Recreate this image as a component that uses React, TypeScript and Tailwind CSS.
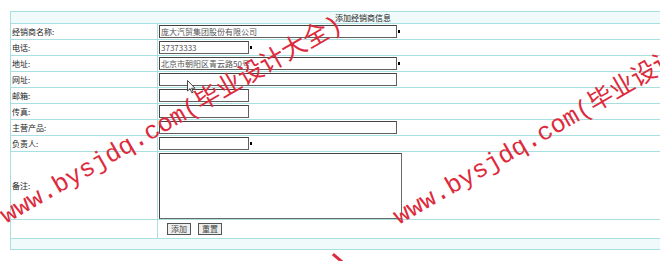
import { FC } from "react";

type Field = { label: string; value: string; width: string; required: boolean };

const fields: Field[] = [
  { label: "经销商名称:", value: "庞大汽贸集团股份有限公司", width: "w-[238px]", required: true },
  { label: "电话:", value: "37373333", width: "w-[90px]", required: true },
  { label: "地址:", value: "北京市朝阳区青云路50号", width: "w-[238px]", required: true },
  { label: "网址:", value: "", width: "w-[238px]", required: false },
  { label: "邮箱:", value: "", width: "w-[90px]", required: false },
  { label: "传真:", value: "", width: "w-[90px]", required: false },
  { label: "主营产品:", value: "", width: "w-[238px]", required: false },
  { label: "负责人:", value: "", width: "w-[90px]", required: true },
];

const font = "font-['Noto_Sans_CJK_SC','Noto_Sans',sans-serif]";

const Watermark: FC<{ className: string }> = ({ className }) => (
  <div
    className={`absolute whitespace-nowrap text-[25px] leading-[25px] text-[#dd2a3c] origin-[0_100%] rotate-[-30deg] font-['Liberation_Mono','Noto_Sans_CJK_SC',monospace] pointer-events-none ${className}`}
  >
    www.bysjdq.com(毕业设计大全)
  </div>
);

export default function App() {
  return (
    <div className={`relative w-[660px] h-[261px] overflow-hidden bg-white ${font} text-[8px] text-[#222]`}>
      <div className="ml-[10px] mt-[11px] w-[706px] border border-[#a8dfe0]">
        <div className="h-[11px] bg-[#f0fafa] flex items-center justify-center leading-none">
          添加经销商信息
        </div>

        {fields.map((f) => (
          <div key={f.label} className="flex h-[16px] border-t border-[#a8dfe0]">
            <div className="w-[147px] border-r border-[#a8dfe0] pl-[1px] flex items-center leading-none">
              {f.label}
            </div>
            <div className="flex-1 flex items-center pl-[1px]">
              <input
                readOnly
                defaultValue={f.value}
                className={`${f.width} h-[13px] border border-[#5f5f5f] border-t-[#444] border-l-[#444] bg-white px-[1px] text-[8px] text-[#555] leading-none outline-none ${font}`}
              />
              {f.required && <span className="ml-[1px] w-[2px] h-[3px] bg-black" />}
            </div>
          </div>
        ))}

        <div className="flex h-[68px] border-t border-[#a8dfe0]">
          <div className="w-[147px] border-r border-[#a8dfe0] pl-[1px] flex items-center leading-none">
            备注:
          </div>
          <div className="flex-1 pl-[1px] pt-[1px]">
            <textarea
              readOnly
              className="block w-[243px] h-[66px] border border-[#6a6a6a] border-t-[#444] border-l-[#444] bg-white resize-none outline-none"
            />
          </div>
        </div>

        <div className="flex h-[19px] border-t border-[#a8dfe0]">
          <div className="w-[147px] border-r border-[#a8dfe0]" />
          <div className="flex-1 flex items-center gap-[7px] pl-[9px]">
            <button className="w-[24px] h-[12px] border border-[#555] bg-[#eeeeee] text-[8px] text-[#444] leading-none flex items-center justify-center">
              添加
            </button>
            <button className="w-[24px] h-[12px] border border-[#555] bg-[#eeeeee] text-[8px] text-[#444] leading-none flex items-center justify-center">
              重置
            </button>
          </div>
        </div>

        <div className="h-[11px] border-t border-[#a8dfe0] bg-[#f0fafa]" />
      </div>

      <svg className="absolute left-[187px] top-[80px]" width="9" height="14" viewBox="0 0 9 14">
        <path d="M0.5 0.5 L0.5 11 L3 8.6 L4.8 12.8 L6.3 12.2 L4.6 8.2 L8 8.2 Z" fill="#fff" stroke="#333" strokeWidth="0.9" />
      </svg>

      <Watermark className="left-[9px] top-[204px]" />
      <Watermark className="left-[402px] top-[205px]" />
      <div className="absolute left-[336px] top-[252px] w-[3px] h-[12px] bg-[#dd2a3c] rotate-[-50deg]" />
    </div>
  );
}
